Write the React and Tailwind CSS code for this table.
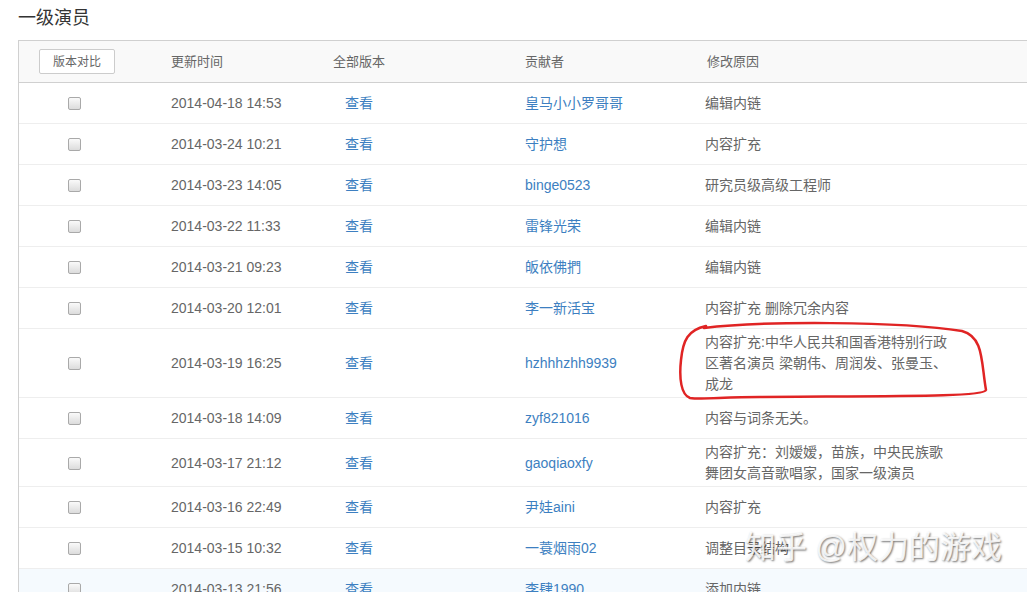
import React from 'react';

const rows = [
  { time: '2014-04-18 14:53', user: '皇马小小罗哥哥', reason: '编辑内链' },
  { time: '2014-03-24 10:21', user: '守护想', reason: '内容扩充' },
  { time: '2014-03-23 14:05', user: 'binge0523', reason: '研究员级高级工程师' },
  { time: '2014-03-22 11:33', user: '雷锋光荣', reason: '编辑内链' },
  { time: '2014-03-21 09:23', user: '皈依佛捫', reason: '编辑内链' },
  { time: '2014-03-20 12:01', user: '李一新活宝', reason: '内容扩充 删除冗余内容' },
  { time: '2014-03-19 16:25', user: 'hzhhhzhh9939', reason: '内容扩充:中华人民共和国香港特别行政区著名演员 梁朝伟、周润发、张曼玉、成龙' },
  { time: '2014-03-18 14:09', user: 'zyf821016', reason: '内容与词条无关。' },
  { time: '2014-03-17 21:12', user: 'gaoqiaoxfy', reason: '内容扩充：刘嫒嫒，苗族，中央民族歌舞团女高音歌唱家，国家一级演员' },
  { time: '2014-03-16 22:49', user: '尹娃aini', reason: '内容扩充' },
  { time: '2014-03-15 10:32', user: '一蓑烟雨02', reason: '调整目录结构' },
  { time: '2014-03-13 21:56', user: '李肆1990', reason: '添加内链', active: true },
];

function Checkbox() {
  return (
    <span className="block w-[13px] h-[13px] rounded-[2px] border border-[#a9a9a9] bg-gradient-to-b from-[#fafafa] to-[#dcdcdc]" />
  );
}

export default function App() {
  return (
    <div className="relative w-[1027px] h-[592px] overflow-hidden bg-white text-[#666] font-['Liberation_Sans','Noto_Sans_CJK_SC',sans-serif]">
      <h2 className="pl-[18px] pt-[6px] text-[18px] leading-[24px] text-[#333] font-normal">一级演员</h2>

      <div className="ml-[18px] mt-[10px] w-[1030px] border-l border-t border-[#d0d0d0]">
        {/* header */}
        <div className="flex items-center h-[42px] bg-[#f9f9f9] border-b border-[#d0d0d0] text-[13px]">
          <div className="w-[152px] pl-[20px]">
            <button className="w-[76px] h-[25px] rounded-[2px] border border-[#ccc] bg-white text-[12px] text-[#666]">版本对比</button>
          </div>
          <div className="w-[162px]">更新时间</div>
          <div className="w-[192px]">全部版本</div>
          <div className="w-[180px]">贡献者</div>
          <div className="pl-[2px]">修改原因</div>
        </div>

        {rows.map((r) => (
          <div
            key={r.time}
            className={`flex items-center min-h-[41px] pt-[3px] pb-[2px] border-b border-[#eee] text-[14px] leading-[21px] ${r.active ? 'bg-[#f5fafe]' : ''}`}
          >
            <div className="w-[152px] pl-[49px]">
              <Checkbox />
            </div>
            <div className="w-[162px]">{r.time}</div>
            <div className="w-[192px] pl-[12px] text-[#3d7fc1]">查看</div>
            <div className="w-[180px] text-[#3d7fc1]">{r.user}</div>
            <div className="w-[250px]">{r.reason}</div>
          </div>
        ))}
      </div>

      <svg className="absolute left-0 top-0 pointer-events-none" width="1027" height="592">
        <path
          d="M 704 328 C 760 321, 900 321, 962 331 C 984 337, 981 362, 986 390 C 984 397, 900 396, 760 397 C 722 397, 702 400, 690 398 C 681 395, 679 378, 681 360 C 683 340, 688 330, 706 326"
          fill="none"
          stroke="#e02424"
          strokeWidth="2.5"
          strokeLinecap="round"
        />
      </svg>

      <div className="absolute left-[745px] top-[528px] text-[31px] leading-[40px] text-[rgba(255,255,255,0.85)] [text-shadow:1px_1px_2px_rgba(0,0,0,0.55)] font-['Liberation_Sans','Noto_Sans_CJK_SC',sans-serif]">
        知乎 @权力的游戏
      </div>
    </div>
  );
}
